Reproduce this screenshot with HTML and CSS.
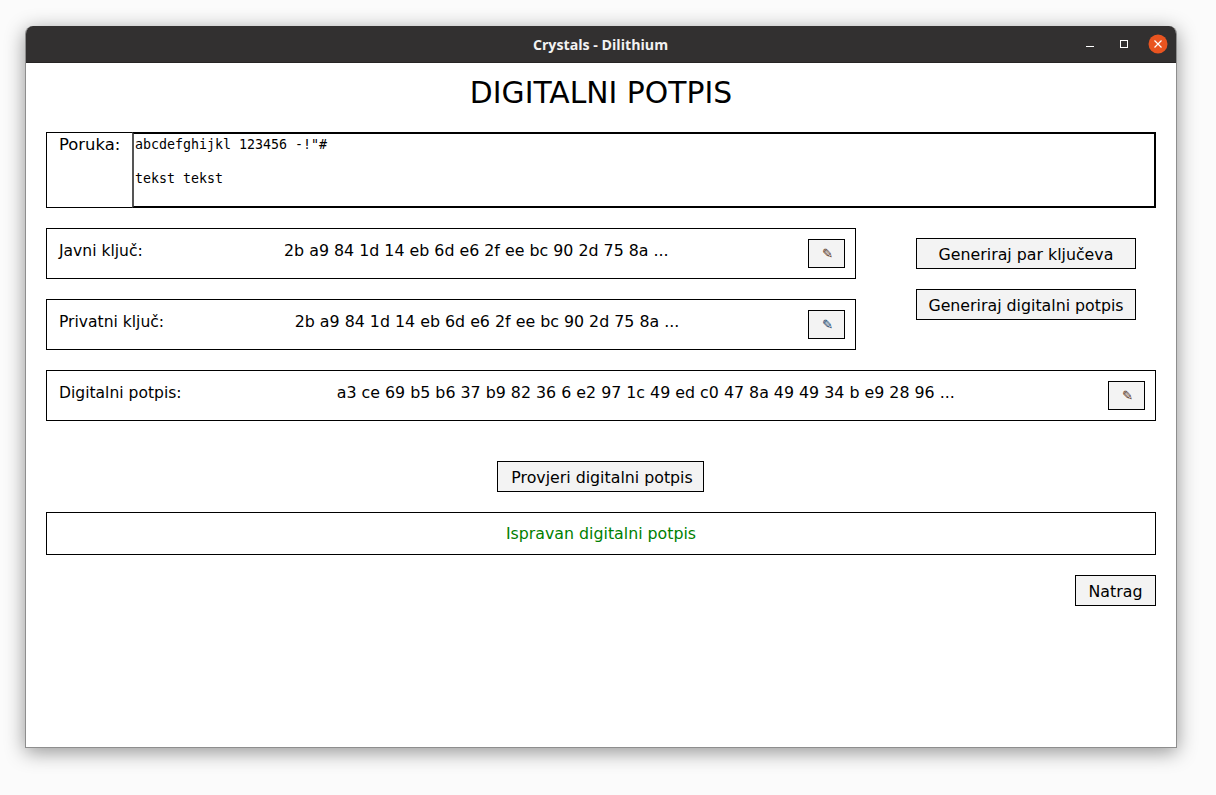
FILE: index.html
```html
<!DOCTYPE html>
<html lang="hr">
<head>
<meta charset="utf-8">
<title>Crystals - Dilithium</title>
<link rel="stylesheet" href="styles.css">
</head>
<body>
<div class="window">
  <header class="titlebar">
    <span class="wintitle">Crystals - Dilithium</span>
    <div class="controls">
      <svg class="ctl" width="20" height="20" viewBox="0 0 20 20"><path d="M6 12.5h8" stroke="#fff" stroke-width="1"/></svg>
      <svg class="ctl" width="20" height="20" viewBox="0 0 20 20"><rect x="6.5" y="6.5" width="7" height="7" fill="none" stroke="#fff" stroke-width="1"/></svg>
      <svg class="ctl" width="20" height="20" viewBox="0 0 20 20"><circle cx="10" cy="10" r="9.5" fill="#e95420"/><path d="M6.5 6.5l7 7M13.5 6.5l-7 7" stroke="#fff" stroke-width="1.2"/></svg>
    </div>
  </header>
  <main class="content">
    <h1 class="heading">DIGITALNI POTPIS</h1>
    <section class="message">
      <div class="message-label">Poruka:</div>
      <div class="message-text">abcdefghijkl 123456 -!"#

tekst tekst</div>
    </section>
    <section class="keys">
      <div class="key-fields">
        <div class="field">
          <span class="field-label">Javni ključ:</span>
          <span class="field-value key-value">2b a9 84 1d 14 eb 6d e6 2f ee bc 90 2d 75 8a ...</span>
          <button class="btn icon-btn icon-brown">✎</button>
        </div>
        <div class="field">
          <span class="field-label">Privatni ključ:</span>
          <span class="field-value key-value">2b a9 84 1d 14 eb 6d e6 2f ee bc 90 2d 75 8a ...</span>
          <button class="btn icon-btn icon-blue">✎</button>
        </div>
      </div>
      <div class="key-actions">
        <button class="btn action">Generiraj par ključeva</button>
        <button class="btn action">Generiraj digitalni potpis</button>
      </div>
    </section>
    <div class="field">
      <span class="field-label">Digitalni potpis:</span>
      <span class="field-value">a3 ce 69 b5 b6 37 b9 82 36 6 e2 97 1c 49 ed c0 47 8a 49 49 34 b e9 28 96 ...</span>
      <button class="btn icon-btn icon-brown">✎</button>
    </div>
    <div class="verify-row"><button class="btn verify">Provjeri digitalni potpis</button></div>
    <div class="result">Ispravan digitalni potpis</div>
    <div class="back-row"><button class="btn back">Natrag</button></div>
  </main>
</div>
</body>
</html>
```
FILE: styles.css
```css
* { box-sizing: border-box; }
html, body { margin: 0; height: 795px; overflow: hidden; }
body {
  background: #fbfbfb;
  padding: 26px 39px 47px 25px;
  font-family: "DejaVu Sans", sans-serif;
  font-size: 15.8px;
  color: #000;
}
.window {
  width: 1152px;
  height: 722px;
  background: #fff;
  border: 1px solid #8e8e8e;
  border-top: 0;
  border-radius: 8px 8px 0 0;
  box-shadow: 0 4px 20px rgba(0,0,0,.42);
  overflow: hidden;
}
.titlebar {
  height: 37px;
  background: #323030;
  position: relative;
  display: flex;
  align-items: center;
  justify-content: center;
  border-bottom: 1px solid #262424;
}
.wintitle {
  color: #f2f2f2;
  font-family: "Open Sans", sans-serif;
  font-weight: 700;
  font-size: 14.2px;
  margin-left: -1px;
}
.controls {
  position: absolute;
  right: 8px;
  top: 8px;
  display: flex;
  gap: 14px;
}
.content {
  padding: 0 20px;
  display: flex;
  flex-direction: column;
}
.heading {
  margin: 0;
  height: 69px;
  padding-top: 11px;
  font-weight: 400;
  font-size: 29.8px;
  line-height: 38px;
  text-align: center;
}
.message {
  display: flex;
  height: 76px;
  border: 1px solid #000;
}
.message-label {
  width: 85px;
  padding: 2px 0 0 12px;
  font-size: 16.4px;
  line-height: 19px;
  white-space: nowrap;
}
.message-text {
  flex: 1;
  margin: -1px -1px -1px 0;
  border: 2px solid #000;
  border-left: 2px solid #555;
  padding: 2px 1px 0 1px;
  font-family: "DejaVu Sans Mono", monospace;
  font-size: 13.3px;
  line-height: 17px;
  white-space: pre-wrap;
}
.keys {
  display: flex;
  margin-top: 20px;
  gap: 60px;
}
.key-fields {
  width: 810px;
  display: flex;
  flex-direction: column;
  gap: 20px;
}
.key-actions {
  width: 220px;
  padding-top: 10px;
  display: flex;
  flex-direction: column;
  gap: 20px;
}
.field {
  height: 51px;
  border: 1px solid #000;
  padding: 10px 10px 10px 12px;
  display: flex;
  align-items: flex-start;
}
.content > .field { margin-top: 20px; }
.field-label { white-space: nowrap; font-size: 15.55px; line-height: 19px; padding-top: 3px; }
.field-value {
  flex: 1;
  text-align: center;
  font-size: 15.84px;
  line-height: 19px;
  padding: 2px 0 0 2px;
  white-space: nowrap;
}
.btn {
  font: inherit;
  color: #000;
  background: #f3f3f3;
  border: 1px solid #000;
  border-radius: 0;
  padding: 1px 0 0;
  height: 31px;
  line-height: 29px;
  white-space: nowrap;
}
.icon-btn {
  width: 37px;
  height: 29px;
  font-size: 13.33px;
  font-weight: 700;
  line-height: 27px;
  padding: 0 0 0 2px;
}
.icon-brown { color: #5a3a2a; }
.icon-blue { color: #1c4a70; }
.action { width: 220px; }
.verify-row {
  margin-top: 40px;
  display: flex;
  justify-content: center;
  padding-right: 1px;
}
.verify { width: 207px; padding-left: 3px; }
.result {
  margin-top: 20px;
  height: 43px;
  border: 1px solid #000;
  color: #008000;
  text-align: center;
  line-height: 41px;
}
.back-row {
  margin-top: 20px;
  display: flex;
  justify-content: flex-end;
}
.back { width: 81px; }
```
